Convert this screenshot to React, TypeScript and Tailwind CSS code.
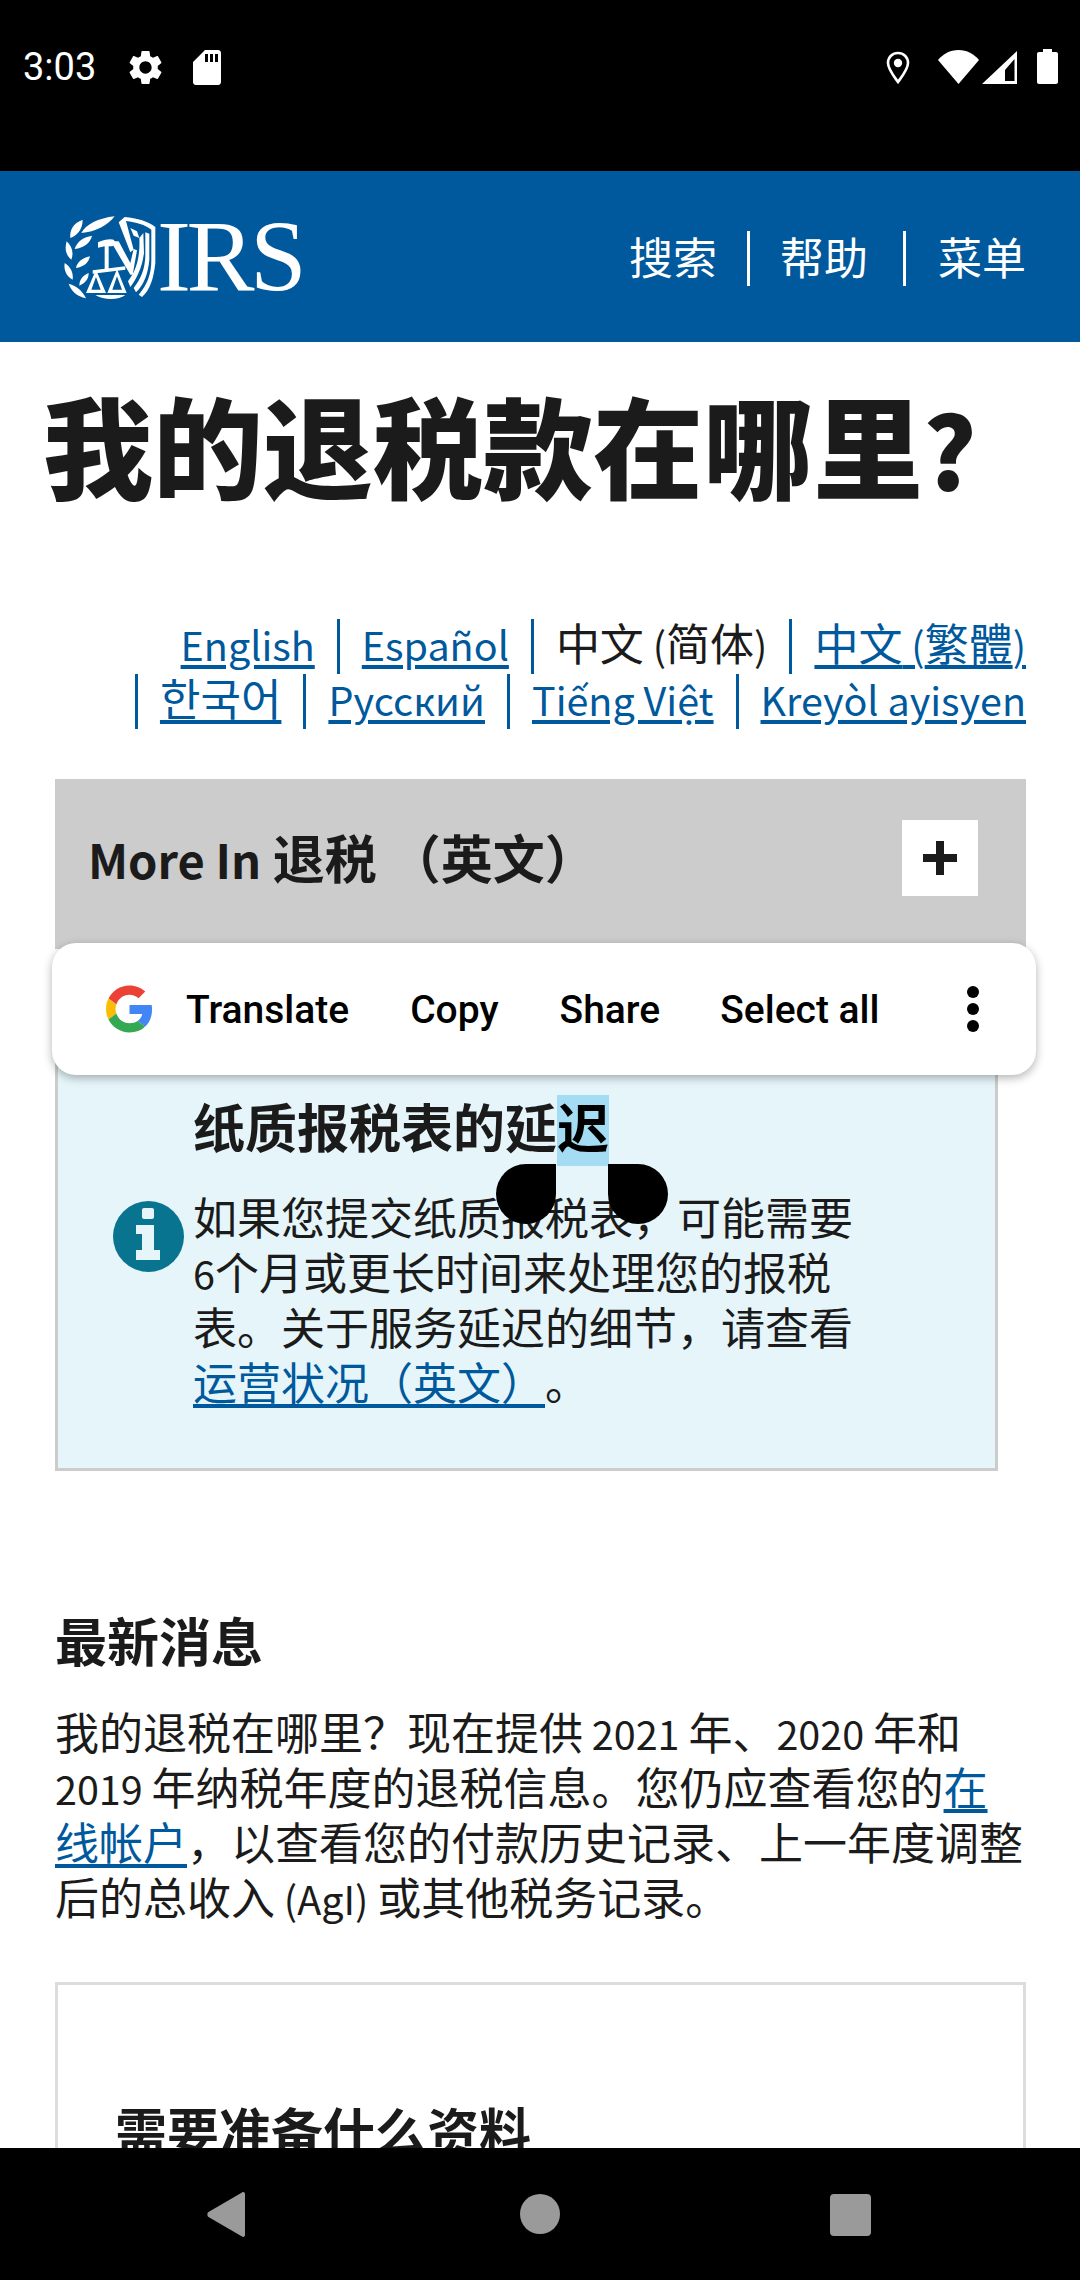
import React from "react";

const cjk = { fontFamily: '"Noto Sans CJK SC", sans-serif' };

function Seal() {
  return (
    <svg width="100" height="88" viewBox="0 0 300 264" fill="#fff">
      <path d="M58 60C70 35 110 15 158 10C140 35 100 58 58 60Z" />
      <path d="M25 75C22 50 35 30 62 20C62 45 50 65 25 75Z" />
      <path d="M28 140C10 125 8 105 14 85C30 100 36 120 28 140Z" />
      <path d="M38 108C45 85 65 72 90 68C85 90 65 105 38 108Z" />
      <path d="M32 200C12 190 5 170 8 150C25 160 35 180 32 200Z" />
      <path d="M42 165C45 148 60 135 84 130C80 150 65 162 42 165Z" />
      <path d="M72 256C45 250 28 235 20 212C45 218 62 235 72 256Z" />
      <path d="M52 218C52 200 62 188 80 180C80 198 70 210 52 218Z" />
      <path d="M108 88C125 80 145 76 155 80L165 95L150 100H140V170H128V100L108 104Z" />
      <path d="M170 28L188 12C225 16 260 25 280 42V150C275 195 265 230 240 252L230 245C255 215 268 185 268 140V50C250 35 222 28 192 24L215 110L205 118Z" />
      <path d="M250 58L262 62V140C258 185 245 215 222 238L215 225C238 195 248 170 250 130Z" />
      <path d="M232 75L244 60L246 120C240 165 225 195 205 222L198 205C220 175 235 140 232 75Z" />
      <path d="M205 45L225 55L232 75L215 68Z" />
      <path d="M155 85H170L205 150L215 108L225 112L212 185H205L155 100Z" />
      <path d="M92 172L190 160V170L92 182Z" />
      <path fillRule="evenodd" d="M102 170L132 240H72ZM102 192L88 230H116Z" />
      <path fillRule="evenodd" d="M165 168L194 240H136ZM165 190L151 230H180Z" />
      <path d="M100 246H190C170 262 125 262 100 246Z" />
    </svg>
  );
}

function L({ children }: { children: React.ReactNode }) {
  return <span className="text-[39.5px] leading-[39px]">{children}</span>;
}

function Item({ children, first }: { children: React.ReactNode; first?: boolean }) {
  return (
    <span className={first ? "pb-[8px]" : "ml-[22px] border-l-[3px] border-[#00599c] pb-[8px] pl-[22px]"}>
      {children}
    </span>
  );
}

const a = "text-[#00599c] underline decoration-[4px] underline-offset-[4px]";

export default function App() {
  return (
    <div className="relative flex h-[2280px] w-[1080px] flex-col overflow-hidden bg-white text-[#1b1b1b] [text-spacing-trim:space-all]" style={cjk}>
      {/* status bar */}
      <div className="flex h-[171px] shrink-0 items-start bg-black pt-[49px] text-white">
        <span className="ml-[23px] text-[38px] leading-[37px] font-['Roboto']">3:03</span>
        <svg className="ml-[29px] mt-[-2px]" width="41" height="41" viewBox="0 0 24 24" fill="#fff">
          <path d="M19.14 12.94c.04-.3.06-.61.06-.94 0-.32-.02-.64-.07-.94l2.03-1.58c.18-.14.23-.41.12-.61l-1.92-3.32c-.12-.22-.37-.29-.59-.22l-2.39.96c-.5-.38-1.03-.7-1.62-.94l-.36-2.54c-.04-.24-.24-.41-.48-.41h-3.84c-.24 0-.43.17-.47.41l-.36 2.54c-.59.24-1.13.57-1.62.94l-2.39-.96c-.22-.08-.47 0-.59.22L2.74 8.87c-.12.21-.08.47.12.61l2.03 1.58c-.05.3-.09.63-.09.94s.02.64.07.94l-2.03 1.58c-.18.14-.23.41-.12.61l1.92 3.32c.12.22.37.29.59.22l2.39-.96c.5.38 1.03.7 1.62.94l.36 2.54c.05.24.24.41.48.41h3.84c.24 0 .44-.17.47-.41l.36-2.54c.59-.24 1.13-.56 1.62-.94l2.39.96c.22.08.47 0 .59-.22l1.92-3.32c.12-.22.07-.47-.12-.61l-2.01-1.58zM12 15.6c-1.98 0-3.6-1.62-3.6-3.6s1.62-3.6 3.6-3.6 3.6 1.62 3.6 3.6-1.62 3.6-3.6 3.6z" />
        </svg>
        <svg className="ml-[27px] mt-[1px]" width="28" height="35" viewBox="0 0 28 35" fill="#fff">
          <path fillRule="evenodd" d="M12 0H25C26.700 0 28 1.300 28 3V32C28 33.700 26.700 35 25 35H3C1.300 35 0 33.700 0 32V12ZM12 4V12H15V4ZM17 4V12H20V4ZM22 4V12H25V4Z" />
        </svg>
        <div className="ml-auto flex items-start">
          <svg className="mt-[2px]" width="24" height="33" viewBox="0 0 24 33" fill="none">
            <path d="M12 31C7 24 2 18 2 12C2 6 6.500 2 12 2C17.500 2 22 6 22 12C22 18 17 24 12 31Z" stroke="#fff" strokeWidth="2.600" />
            <circle cx="12" cy="12" r="4.200" fill="#fff" />
          </svg>
          <svg className="ml-[28px] mt-[1px]" width="41" height="34" viewBox="0 0 41 34" fill="#fff">
            <path d="M0 10C5 4 12 0 20.500 0C29 0 36 4 41 10L20.500 34Z" />
          </svg>
          <svg className="ml-[3px] mt-[2px]" width="35" height="33" viewBox="0 0 35 33" fill="#fff">
            <path fillRule="evenodd" d="M35 0V33H0ZM32.500 8L23 19V30H32.500Z" />
          </svg>
          <svg className="ml-[20px] mr-[22px]" width="21" height="35" viewBox="0 0 21 35" fill="#fff">
            <path d="M6 0H15V3H19C20.100 3 21 3.900 21 5V33C21 34.100 20.100 35 19 35H2C.9 35 0 34.100 0 33V5C0 3.900.9 3 2 3H6Z" />
          </svg>
        </div>
      </div>

      {/* header */}
      <header className="flex h-[171px] shrink-0 items-center bg-[#00599c] pl-[62px] pr-[54px] text-white">
        <div className="flex items-center">
          <Seal />
          <span className="ml-[-5px] text-[102px] leading-[80px] tracking-[-4.500px] font-['Liberation_Serif']">IRS</span>
        </div>
        <nav className="ml-auto flex items-center text-[44px] leading-[55px]">
          <span>搜索</span>
          <span className="ml-[30px] mr-[30px] mt-[4px] h-[55px] w-[3px] bg-white" />
          <span>帮助</span>
          <span className="ml-[35px] mr-[32px] mt-[4px] h-[55px] w-[3px] bg-white" />
          <span>菜单</span>
        </nav>
      </header>

      {/* body */}
      <main className="min-h-0 flex-1 overflow-hidden">
        <h1 className="pl-[43px] pt-[36px] text-[110px] font-black leading-[130px] whitespace-nowrap">
          我的退税款在哪里<span className="text-[100px] leading-[100px]">?</span>
        </h1>

        <div className="mt-[111px] pr-[54px] text-[44px] leading-[47px]">
          <div className="flex justify-end whitespace-nowrap">
            <Item first><span className={a}><L>English</L></span></Item>
            <Item><span className={a}><L>Español</L></span></Item>
            <Item>中文<L> (</L>简体<L>)</L></Item>
            <Item><span className={a}>中文<L> (</L>繁體<L>)</L></span></Item>
          </div>
          <div className="flex justify-end whitespace-nowrap">
            <Item><span className={a}>한국어</span></Item>
            <Item><span className={a}><L>Русский</L></span></Item>
            <Item><span className={a}><L>Tiếng Việt</L></span></Item>
            <Item><span className={a}><L>Kreyòl ayisyen</L></span></Item>
          </div>
        </div>

        <div className="ml-[55px] mr-[54px] mt-[50px] flex h-[170px] items-start justify-between bg-[#cccccc] pl-[33px] pr-[48px] pt-[41px]">
          <span className="mt-[5px] text-[52px] font-bold leading-[64px]"><span className="text-[47px] leading-[47px]">More In</span> 退税 （英文）</span>
          <span className="flex h-[76px] w-[76px] items-center justify-center bg-white">
            <svg width="36" height="36" viewBox="0 0 36 36" fill="#1b1b1b"><path d="M14 1H22V14H35V22H22V35H14V22H1V14H14Z" /></svg>
          </span>
        </div>

        <div className="ml-[55px] mt-[51px] flex h-[471px] w-[943px] border-[3px] border-[#cccccc] bg-[#e5f5f9] pt-[88px]">
          <svg className="ml-[55px] mt-[110px] shrink-0" width="71" height="71" viewBox="0 0 71 71">
            <circle cx="35.500" cy="35.500" r="35.500" fill="#09748f" />
            <rect x="29" y="7" width="12" height="11" rx="2" fill="#e5f5f9" />
            <path d="M23 24H41V49H47V59H23V49H29V33H23Z" fill="#e5f5f9" />
          </svg>
          <div className="ml-[9px] w-[670px]">
            <h3 className="text-[52px] font-bold leading-[70px]">
              纸质报税表的延<span className="inline-block h-[71px] bg-[#a3dcf3] leading-[61px] text-black">迟</span>
            </h3>
            <p className="mt-[23px] text-[44px] leading-[55px]">
              如果您提交纸质报税表，可能需要<L>6</L>个月或更长时间来处理您的报税表。关于服务延迟的细节，请查看<span className={a}>运营状况（英文）</span>。
            </p>
          </div>
        </div>

        <div className="ml-[55px] mr-[54px] mt-[134px]">
          <h2 className="text-[52px] font-bold leading-[70px]">最新消息</h2>
          <p className="mt-[29px] text-[44px] leading-[55px]">
            我的退税在哪里？现在提供<L> 2021 </L>年、<L>2020 </L>年和<L> 2019 </L>年纳税年度的退税信息。您仍应查看您的<span className={a}>在线帐户</span>，以查看您的付款历史记录、上一年度调整后的总收入<L> (AgI) </L>或其他税务记录。
          </p>
          <div className="mt-[58px] h-[300px] border-[3px] border-[#dcdcdc] pl-[57px] pt-[110px]">
            <h3 className="text-[52px] font-bold leading-[70px]">需要准备什么资料</h3>
          </div>
        </div>
      </main>

      {/* nav bar */}
      <div className="flex h-[132px] shrink-0 items-start bg-black pt-[44px]">
        <svg className="ml-[207px]" width="38" height="45" viewBox="0 0 38 45" fill="#9a9a9a">
          <path d="M35 .5C36.500-.5 38 .5 38 2V43C38 44.500 36.500 45.500 35 44.500L1.500 25C0 24 0 21 1.500 20Z" />
        </svg>
        <svg className="ml-[275px] mt-[2px]" width="40" height="40" viewBox="0 0 40 40" fill="#9a9a9a"><circle cx="20" cy="20" r="20" /></svg>
        <svg className="ml-[270px] mt-[2px]" width="41" height="42" viewBox="0 0 41 42" fill="#9a9a9a"><rect width="41" height="42" rx="4" /></svg>
      </div>

      {/* text selection toolbar */}
      <div className="absolute left-[52px] top-[943px] flex h-[132px] w-[984px] items-center rounded-[24px] bg-white pl-[54px] text-[39px] text-black shadow-[0_3px_10px_rgba(0,0,0,0.3)] font-['Roboto'] font-medium">
        <svg width="47" height="48" viewBox="0 0 48 48" className="mr-[33px]">
          <path fill="#EA4335" d="M24 9.500c3.500 0 6.700 1.200 9.200 3.600l6.900-6.900C35.900 2.400 30.500 0 24 0 14.600 0 6.500 5.400 2.600 13.200l8 6.200C12.400 13.700 17.700 9.500 24 9.500z" />
          <path fill="#4285F4" d="M47 24.500c0-1.600-.1-3.100-.4-4.500H24v9h13c-.6 3-2.200 5.500-4.800 7.200l7.700 6C44.400 38.100 47 31.900 47 24.500z" />
          <path fill="#FBBC05" d="M10.500 28.600c-.5-1.400-.8-3-.8-4.600s.3-3.200.8-4.600l-8-6.200C.9 16.500 0 20.100 0 24s.9 7.500 2.600 10.800l7.900-6.200z" />
          <path fill="#34A853" d="M24 48c6.500 0 11.900-2.100 15.900-5.800l-7.700-6c-2.100 1.400-4.900 2.300-8.200 2.300-6.300 0-11.600-4.200-13.500-9.900l-8 6.200C6.500 42.600 14.600 48 24 48z" />
        </svg>
        <span className="pt-[2px]">Translate</span>
        <span className="ml-[61px] pt-[2px]">Copy</span>
        <span className="ml-[61px] pt-[2px]">Share</span>
        <span className="ml-[60px] pt-[2px]">Select all</span>
        <span className="ml-[88px] flex flex-col gap-[5px]">
          <i className="h-[12px] w-[12px] rounded-full bg-black" />
          <i className="h-[12px] w-[12px] rounded-full bg-black" />
          <i className="h-[12px] w-[12px] rounded-full bg-black" />
        </span>
      </div>

      {/* selection handles */}
      <div className="absolute left-[496px] top-[1164px] h-[60px] w-[60px] rounded-b-full rounded-tl-full bg-black" />
      <div className="absolute left-[608px] top-[1164px] h-[60px] w-[60px] rounded-b-full rounded-tr-full bg-black" />
    </div>
  );
}
